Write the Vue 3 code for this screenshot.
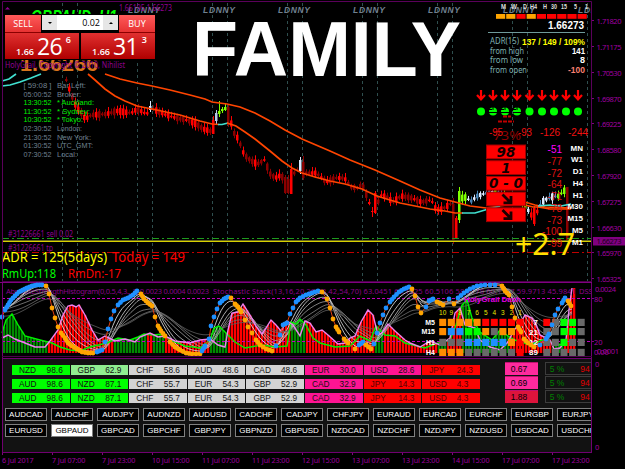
<template>
  <div class="terminal">
    <section class="price-pane">
      <svg width="592" height="282" viewBox="0 0 592 282">
        <line v-for="x in sessionLines" :key="'v' + x" :x1="x + 0.5" y1="3" :x2="x + 0.5" y2="281" class="session" />
        <text v-for="x in sessionTags" :key="'s' + x" :x="x" y="13" textLength="32" class="session-tag">LDNNY</text>

        <!-- velas -->
        <g v-for="c in candles" :key="'c' + c.x" :fill="c.color">
          <rect :x="c.x + 1" :y="c.high" width="1" :height="c.low - c.high" />
          <rect :x="c.x" :y="c.top" width="2.5" :height="c.bottom - c.top" />
        </g>

        <line x1="2" y1="238.5" x2="592" y2="238.5" class="order" />
        <line x1="2" y1="240.5" x2="592" y2="240.5" stroke="#66661a" />
        <line x1="2" y1="241.5" x2="592" y2="241.5" stroke="#d8d000" />
        <line x1="2" y1="252.5" x2="592" y2="252.5" class="order tp" />

        <polyline v-for="(m, i) in averages" :key="'m' + i" :points="m.points" :stroke="m.color" class="average" />

        <text
          v-for="(t, i) in priceTexts"
          :key="'t' + i"
          :x="t.x"
          :y="t.y"
          :font-size="t.size"
          :fill="t.color"
          :textLength="t.w"
          :class="t.kind"
          lengthAdjust="spacingAndGlyphs"
        >{{ t.text }}</text>

        <!-- painel de tendência -->
        <rect v-for="(c, i) in trendColors" :key="'q' + i" :x="496 + i * 10.2" y="14" width="9.2" height="4.8" :fill="c" />
        <line x1="488" y1="32.5" x2="585" y2="32.5" stroke="#6f9a9a" />
        <g v-for="(x, i) in signalX" :key="'a' + i">
          <path :transform="'translate(' + x + ' 90)'" d="M0 0V9M-4 5L0 9.3L4 5" class="arrow" />
          <circle :cx="x" cy="111.5" r="4" fill="#0f0" />
          <path v-if="i > 0 && i < 4" :transform="'translate(' + x + ' 111)'" d="M-4 -1.5H-1M-4 1.5H4M0 -4V-1" stroke="#000" />
        </g>
        <path d="M503 116.5h8M498 121.5h16" stroke="#c00000" stroke-width="2" stroke-dasharray="4 1" />
        <g v-for="(b, i) in boxes" :key="'b' + i">
          <rect x="486.5" :y="145 + i * 15.7" width="39" height="13.8" fill="#f00" stroke="#a00000" />
          <text v-if="b" x="506" :y="156.8 + i * 15.7" class="box-text" text-anchor="middle">{{ b }}</text>
          <path v-else :transform="'translate(507 ' + (151.8 + i * 15.7) + ')'" d="M-4.5 -4.5L3.5 3.5M4 -3V4H-3.5" stroke="#1a0000" stroke-width="2.8" fill="none" />
        </g>
        <g v-for="(r, i) in frames" :key="'f' + i">
          <text x="562" :y="153 + i * 11.75" class="strength" :fill="i ? '#e01010' : '#f0f'">{{ r[1] }}</text>
          <text x="583" :y="150.5 + i * 11.75" class="frame-name">{{ r[0] }}</text>
        </g>
        <text x="515" y="254.5" textLength="60" class="pips" lengthAdjust="spacingAndGlyphs">+2.7</text>
        <path d="M5 9.5l2.5 -2.5l2.5 2.5z" fill="#900090" />
        <path d="M2.5 281V1.5H591.5V281" fill="none" stroke="#5a005a" />
        <path d="M2 281.5H592" stroke="#4a004a" />
      </svg>

      <div class="trade">
        <div class="trade-top">
          <button class="side">SELL</button>
          <div class="lot">
            <span class="step"><i class="down"></i></span>
            <span class="amount">0.02</span>
            <span class="step"><i class="up"></i></span>
          </div>
          <button class="side">BUY</button>
        </div>
        <div class="trade-prices">
          <div class="quote" v-for="q in quotes" :key="q[1]">
            <span class="base">{{ q[0] }}</span>
            <span class="big">{{ q[1] }}</span>
            <span class="sup">{{ q[2] }}</span>
          </div>
        </div>
      </div>
    </section>

    <svg class="axis" width="33" height="282" viewBox="592 0 33 282">
      <g v-for="(p, i) in prices" :key="p">
        <line x1="592" :x2="594" :y1="priceY[i]" :y2="priceY[i]" stroke="#800080" />
        <text x="596.5" :y="priceY[i] + 3" textLength="25" class="axis-text">{{ p }}</text>
      </g>
      <rect x="593" y="237" width="32" height="8.5" fill="#800080" />
      <text x="596.5" y="244.3" textLength="25" class="axis-text tag">1.66273</text>
    </svg>

    <svg class="osc" width="592" height="76" viewBox="0 282 592 76">
      <rect x="0" y="282" width="592" height="1" fill="#800080" />
      <rect v-for="b in bars" :key="'h' + b.x" :x="b.x" :y="b.y" width="2.3" :height="353 - b.y" :fill="b.color" />
      <text x="6" y="293.5" textLength="203" class="osc-title">AbsoluteStrengthHistogram(0,0.5,4,3..,1) 0.0023 0.0004 0.0023</text>
      <text x="213" y="293.5" textLength="363" class="osc-title">Stochastic Stack(13,16,20,26,33,42,54,70) 63.0451 60.1225 60.5106 58.9178 60.1157 59.9713 45.9841</text>
      <text x="579" y="293.5" class="osc-title">DSS</text>
      <line x1="2" y1="298.5" x2="592" y2="298.5" class="level" />
      <line x1="2" y1="341.5" x2="592" y2="341.5" class="level" />
      <polyline v-for="(s, i) in stack" :key="'k' + i" :points="s" :stroke="stackColors[i]" class="stack" />
      <polyline :points="join(greenLine)" stroke="#00f000" class="strength-line" />
      <polyline :points="join(pinkLine)" stroke="#ee82ee" class="strength-line" />

      <g v-for="(row, r) in dashRows" :key="'r' + r">
        <template v-for="(c, i) in row" :key="i">
          <rect :x="439.2 + i * 8.6" :y="dashY[r] - 3.6" width="7" height="7.2" :fill="cellColor[c]" />
        </template>
        <template v-for="(c, i) in dashSide[r]" :key="'x' + i">
          <rect :x="543.3 + i * 8.6" :y="dashY[r] - 3.6" width="7" height="7.2" :fill="cellColor[c]" />
        </template>
        <text x="435" :y="dashY[r] + 2.5" class="dash-label">{{ ['M5', 'M15', 'H1', 'H4'][r] }}</text>
        <text x="538" :y="dashY[r] + 3" class="dash-label num">{{ ['7', '21', '12', '89'][r] }}</text>
      </g>
      <text v-for="n in 10" :key="'n' + n" :x="442.7 + (n - 1) * 8.6" y="315" class="dash-head">{{ 11 - n }}</text>

      <polyline :points="join(dots)" stroke="#e04010" fill="none" />
      <circle v-for="(d, i) in dots" :key="'d' + i" :cx="d[0]" :cy="d[1]" r="2.4" :fill="d[2] ? '#1e90ff' : '#ffa500'" />
      <text x="464" y="301.5" textLength="57" class="dash-title">HolyGrail Dash</text>
      <path d="M2.5 283V358M591.5 283V358" stroke="#700070" />
      <path d="M2 356.5H592" stroke="#4a004a" />
    </svg>

    <svg class="axis" width="33" height="76" viewBox="592 282 33 76">
      <path d="M592 298.5h2M592 341.5h2" stroke="#800080" />
      <text x="595" y="291.5" textLength="21" class="axis-text">0.0024</text>
      <text x="594" y="301.5" class="axis-text">80</text>
      <text x="594" y="344.5" class="axis-text">20</text>
      <text x="594" y="355" class="axis-text">0.00</text>
      <text x="597" y="354" textLength="22" class="axis-text">0.0001</text>
    </svg>

    <section class="board">
      <div class="strengths">
        <div class="currencies">
          <template v-for="(row, r) in currencies" :key="r">
            <div v-for="(c, i) in row" :key="i" class="currency" :class="c[2]">
              <span>{{ c[0] }}</span><span class="value">{{ c[1] }}</span>
            </div>
          </template>
        </div>
        <div class="ratios">
          <div class="ratio">0.67</div>
          <div class="ratio">0.69</div>
          <div class="ratio crimson">1.88</div>
        </div>
        <div class="percents">
          <div v-for="n in 3" :key="n" class="percent"><span>5 %</span><b>94</b></div>
        </div>
      </div>
      <div class="pairs">
        <button v-for="p in pairs" :key="p" :class="{ active: p === 'GBPAUD' }">{{ p }}</button>
      </div>
    </section>

    <div class="board-axis"><span>0</span><span>0</span></div>

    <footer class="times">
      <span v-for="t in times" :key="t">{{ t }}</span>
    </footer>
  </div>
</template>

<script setup>
const sessionLines = [62, 77, 137, 152, 212, 227, 287, 302, 362, 377, 437, 452, 512, 527, 587]
const sessionTags = [128, 203, 278, 353, 428, 503, 578]
const quotes = [['1.66', '26', '6'], ['1.66', '31', '3']]

const join = (pts) => pts.map((p) => p[0] + ',' + p[1]).join(' ')

// interpolação linear entre os nós
const at = (pts, x) => {
  if (x <= pts[0][0]) return pts[0][1]
  for (let i = 1; i < pts.length; i++) {
    if (x <= pts[i][0]) {
      const [x0, y0] = pts[i - 1]
      const [x1, y1] = pts[i]
      return y0 + ((y1 - y0) * (x - x0)) / (x1 - x0)
    }
  }
  return pts[pts.length - 1][1]
}

const toPairs = (s) => s.split(' ').map((p) => p.split(',').map(Number))

// --- Velas ---
const path = toPairs('65,80 70,95 75,107 80,113 84,119 90,115 105,114 116,111 130,113 136,109 145,114 152,109 158,112 165,115 175,118 185,120 195,124 202,129 209,131 228,115 232,132 237,139 243,155 250,161 256,164 263,160 269,174 274,178 280,175 286,188 292,174 298,168 305,173 315,173 325,182 335,178 343,178 350,187 356,188 361,184 367,200 371,212 375,208 379,195 386,197 391,202 400,196 410,198 420,202 430,200 435,210 441,209 449,204 463,197 470,201 476,196 482,194 490,192 520,200 530,215 534,217 538,206 543,200 550,197 557,196 565,189')
const special = {
  149: [101, 112, 106, 110, '#dce8ff'],
  212: [116, 134, 120, 134, '#f00'],
  215: [110, 124, 113, 121, '#b8c8e8'],
  218: [101, 117, 111, 114, '#7fff00'],
  221: [107, 113, 109, 111, '#7fff00'],
  224: [103, 111, 107, 110, '#7fff00'],
  227: [104, 127, 107, 125, '#8b0000'],
  284: [175, 194, 177, 193, '#8b0000'],
  287: [175, 194, 179, 193, '#8b0000'],
  290: [163, 194, 169, 194, '#f00'],
  299: [157, 174, 160, 171, '#dce8ff'],
  302: [156, 180, 162, 178, '#8b0000'],
  371: [207, 217, 211, 212, '#f00'],
  374: [191, 214, 193, 213, '#f00'],
  452: [198, 244, 204, 241, '#8b0000'],
  455: [216, 238, 218, 238, '#f00'],
  458: [187, 223, 191, 220, '#7fff00'],
  533: [206, 226, 208, 224, '#f00'],
  566: [187, 240, 187, 240, '#8b0000']
}
const candles = []
for (let x = 65; x <= 566; x += 3) {
  const s = special[x]
  if (s) {
    candles.push({ x, high: s[0], low: s[1], top: s[2], bottom: s[3], color: s[4] })
    continue
  }
  const y = at(path, x)
  const n = Math.abs(Math.sin(x * 12.9898) * 43758.5453) % 1
  const m = Math.abs(Math.sin(x * 4.1414) * 9301.17) % 1
  const body = 0.7 + n * 2.8
  let color = m > 0.55 ? '#f00' : '#8b0000'
  if (x > 458 && x < 528) color = n > 0.7 ? '#7fff00' : m > 0.5 ? '#4682b4' : '#dce8ff'
  if (x > 536) color = x > 556 ? '#7fff00' : m > 0.5 ? '#4682b4' : '#dce8ff'
  candles.push({ x, high: y - body - 1 - m * 3.5, low: y + body + 1 + n * 2.5, top: y - body, bottom: y + body, color })
}

const averages = [
  { color: '#40e0d0', points: '2,81 9,79 16,74' },
  { color: '#40e0d0', points: '2,86 10,85 20,82 31,78 41,74' },
  { color: '#ff4500', points: '105,74 120,79 137,83 152,86 170,90 190,95 205,99 212,102 227,104 240,107 255,113 270,121 285,130 302,139 330,151 350,160 375,170 400,181 420,190 440,198 455,202 470,206 486,208 525,202 535,205 545,207 571,208' },
  { color: '#ff4500', points: '88,74 95,80 105,89 115,96 125,101 137,106 152,109 180,115 200,121 212,124 219,124.5' },
  { color: '#40e0d0', points: '218,124.5 222,124.5 228,123' },
  { color: '#ff4500', points: '227,123 236,126 245,132 255,139 270,151 282,161 292,168 302,173 315,177 330,181 345,184 362,189 377,196 390,200 400,203 415,206 430,209 445,211 455,213 463,213' },
  { color: '#40e0d0', points: '462,213 475,213 485,210 500,206' },
  { color: '#ff4500', points: '525,205 533,207 538,207 550,209 571,209' },
  { color: '#40e0d0', points: '538,206 550,205 561,206 571,204' }
]

// --- Textos do gráfico ---
const priceTexts = [
  { x: 31, y: 23, size: 19, w: 86, color: '#0f0', kind: 'bold slant', text: 'GBPAUD, H1' },
  { x: 119, y: 11, size: 8, w: 53, color: '#900090', kind: 'narrow', text: '1.66195 1.66273' },
  { x: 20, y: 71, size: 20, w: 78, color: '#d8731c', kind: 'bold', text: '1.66266' },
  { x: 5, y: 68, size: 8, w: 120, color: '#900090', kind: 'narrow', text: 'HolyGrail, Copyright © 2010, Nihilist' },
  { x: 192, y: 76, size: 77, w: 269, color: '#fff', kind: 'bold', text: 'FAMILY' },
  { x: 548, y: 29, size: 10, w: 36, color: '#fff', kind: 'bold cond', text: '1.66273' },
  { x: 490, y: 44, size: 8.5, w: 29, color: '#7fb0b0', kind: 'narrow', text: 'ADR(15)' },
  { x: 522, y: 44.5, size: 8.5, w: 63, color: '#ff0', kind: 'bold cond', text: '137 / 149 / 109%' },
  { x: 490, y: 53.5, size: 8.5, w: 34, color: '#7fb0b0', kind: 'narrow', text: 'from high' },
  { x: 490, y: 63, size: 8.5, w: 33, color: '#7fb0b0', kind: 'narrow', text: 'from low' },
  { x: 490, y: 72.5, size: 8.5, w: 37, color: '#7fb0b0', kind: 'narrow', text: 'from open' },
  { x: 572, y: 54, size: 8.5, w: 13, color: '#fff', kind: 'bold cond', text: '141' },
  { x: 580, y: 63.3, size: 8.5, w: 5, color: '#fff', kind: 'bold cond', text: '8' },
  { x: 568, y: 72.7, size: 8.5, w: 17, color: '#fa8072', kind: 'bold cond', text: '-100' },
  { x: 501, y: 9, size: 6.5, w: 5, color: '#ddd', kind: 'bold', text: 'M' },
  { x: 511, y: 9, size: 6.5, w: 6, color: '#ddd', kind: 'bold', text: 'W' },
  { x: 523, y: 9, size: 6.5, w: 4, color: '#ddd', kind: 'bold', text: 'D' },
  { x: 530, y: 9, size: 6.5, w: 7, color: '#ddd', kind: 'bold', text: 'H4' },
  { x: 543, y: 9, size: 6.5, w: 4, color: '#ddd', kind: 'bold', text: 'H' },
  { x: 551, y: 9, size: 6.5, w: 6, color: '#ddd', kind: 'bold', text: '30' },
  { x: 561, y: 9, size: 6.5, w: 6, color: '#ddd', kind: 'bold', text: '15' },
  { x: 574, y: 9, size: 6.5, w: 3, color: '#ddd', kind: 'bold', text: '5' },
  { x: 585, y: 9, size: 6.5, w: 3, color: '#ddd', kind: 'bold', text: '1' },
  { x: 493, y: 140, size: 13, w: 28, color: '#8b0000', kind: 'narrow', text: '73%' },
  { x: 489, y: 136, size: 10, w: 14, color: '#f01010', kind: 'cond', text: '-95' },
  { x: 518, y: 136, size: 10, w: 14, color: '#f01010', kind: 'cond', text: '-93' },
  { x: 540, y: 136, size: 10, w: 20, color: '#f01010', kind: 'cond', text: '-126' },
  { x: 568, y: 136, size: 10, w: 20, color: '#f01010', kind: 'cond', text: '-244' },
  { x: 8, y: 237, size: 8, w: 65, color: '#900090', kind: 'narrow', text: '#31226661 sell 0.02' },
  { x: 8, y: 251, size: 8, w: 45, color: '#900090', kind: 'narrow', text: '#31226661 tp' },
  { x: 2, y: 262, size: 14, w: 105, color: '#ff0', kind: 'narrow', text: 'ADR = 125(5days)' },
  { x: 112, y: 262, size: 14, w: 73, color: '#f00', kind: 'narrow', text: 'Today = 149' },
  { x: 2, y: 277.5, size: 12.5, w: 54, color: '#0f0', kind: 'narrow', text: 'RmUp:118' },
  { x: 68, y: 277.5, size: 12.5, w: 53, color: '#f00', kind: 'narrow', text: 'RmDn:-17' }
]
const clocks = [
  ['[ 59:08 ]', 'Bar Left:', 29],
  ['05:00:52', 'Broker:', 24],
  ['13:30:52', '* Auckland:', 37, true],
  ['11:30:52', '* Sydney:', 33, true],
  ['10:30:52', '* Tokyo:', 26, true],
  ['02:30:52', 'London:', 25],
  ['21:30:52', 'New York:', 34],
  ['01:30:52', 'UTC_GMT:', 36],
  ['07:30:52', 'Local:', 20]
]
clocks.forEach((c, i) => {
  const color = c[3] ? '#00f000' : '#708090'
  const y = 88 + i * 8.6
  priceTexts.push({ x: 23.5, y, size: 8, w: 28, color, kind: 'cond', text: c[0] })
  priceTexts.push({ x: 57, y, size: 8, w: c[2], color, kind: 'cond', text: c[1] })
})

const trendColors = ['#ffa500', '#ffa500', '#f00', '#ffa500', '#f00', '#f00', '#f00', '#f00', '#f00']
const signalX = [481, 493, 505, 517, 529.5, 542, 554, 566, 578]
const boxes = ['98', '1', '0 - 0', '', '']
const frames = [['MN', '-51'], ['W1', '-77'], ['D1', '-72'], ['H4', '-64'], ['H1', '-71'], ['M30', '-78'], ['M15', '-73'], ['M5', '-100'], ['M1', '-99']]

const prices = ['1.71820', '1.71175', '1.70530', '1.69870', '1.69225', '1.68580', '1.67920', '1.67275', '1.66630', '1.65970', '1.65325']
const priceY = [20.5, 46.5, 72.5, 98.5, 123.5, 149.5, 175.5, 201.5, 227.5, 252.5, 278.5]

// --- Osciladores ---
const pinkLine = toPairs('2,338 8,335 15,339 25,343 35,347 45,347 50,341 58,330 63,315 68,306 72,305 76,307 79,305 85,315 92,330 98,340 105,336 115,341 125,339 135,342 140,337 150,333 158,337 165,336 175,341 190,343 200,340 210,339 218,345 225,347 228,330 232,313 238,312 243,304 250,315 256,326 262,334 266,328 271,320 276,325 281,331 287,321 293,325 300,336 305,321 310,323 316,332 322,330 328,335 338,344 345,343 350,338 355,336 361,322 368,310 373,315 378,335 382,333 388,324 395,331 405,340 410,343 420,347 430,341 440,345 450,338 455,313 460,308 465,325 475,328 480,340 490,347 500,350 508,342 514,330 520,324 525,315 532,318 536,324 540,335 550,340 554,349 560,348 566,340 569,310 572,288')
const greenLine = toPairs('2,333 6,320 12,314 18,325 25,336 40,340 52,343 60,347 70,350 80,351 90,347 107,343 118,338 130,340 138,337 144,334 153,335 162,334 170,340 185,346 200,348 210,340 214,328 219,326 226,333 235,342 245,348 262,345 275,347 287,346 291,322 296,324 300,319 306,325 313,338 320,343 335,347 350,346 360,336 370,341 376,326 385,335 395,336 405,343 425,348 435,344 450,340 456,325 462,305 467,300 472,318 480,332 492,340 500,330 508,336 515,340 530,345 545,339 555,344 566,345')
const bars = []
for (let x = 3; x < 574; x += 3) {
  const p = at(pinkLine, x + 1)
  const g = x > 568 ? 350 : at(greenLine, x + 1)
  bars.push({ x, y: Math.min(p, g), color: p < g ? '#f00' : '#008a00' })
}

const waves = [
  [1, '2,317 5,310 8,305 11,300 15,296 19,292 23,290 27,288 32,286 37,285 42,285'],
  [0, '46,286 49,294 52,308 55,318 58,327 61,333 65,338 68,343 72,346 77,349 82,352 88,353 93,353'],
  [1, '97,352 102,350 105,342 108,329 111,319 114,311 118,305 123,300 128,298 133,295 137,291'],
  [0, '141,294 144,299 148,303 152,306 155,317 158,326 161,331 165,336 170,342 175,347 180,350 186,353 192,354 200,354'],
  [1, '202,351 205,346 209,339 211,326 214,317 217,309 220,303 224,299 228,297'],
  [0, '231,298 235,304 238,307 241,312 245,320 248,327 252,333 256,340 260,345 266,349 272,351'],
  [1, '276,346 280,335 283,325 287,323 290,314 293,308 296,302 300,298 306,295 312,293 318,291'],
  [0, '322,292 327,299 330,308 333,319 336,327 339,332 344,339 348,343 355,349'],
  [1, '359,345 363,342'],
  [0, '366,345 371,349'],
  [1, '374,344 377,333 380,323 383,315 386,308 390,302 394,297 399,292 404,289 409,287'],
  [0, '412,289 415,296 418,307 421,313'],
  [1, '426,307 429,301 433,299'],
  [0, '437,302 443,305'],
  [1, '449,299'],
  [0, '454,304'],
  [1, '458,298 464,293 470,289 477,286 485,285 495,285'],
  [0, '502,286 505,291 509,295 512,307 515,318 518,327 521,332 524,339 528,343 534,347'],
  [1, '540,345 546,339 549,334 552,325 555,315 558,309 562,303 565,298'],
  [0, '568,301 571,306']
]
const dots = []
waves.forEach(([up, s]) => {
  toPairs(s).forEach((p, i, all) => {
    const prev = all[i - 1]
    // preenche os trechos mais planos
    if (prev && Math.abs(p[1] - prev[1]) < 6) {
      dots.push([(p[0] + prev[0]) / 2, (p[1] + prev[1]) / 2, up])
    }
    dots.push([p[0], p[1], up])
  })
})

// linhas do estocástico: médias cada vez mais lentas
const stackColors = ['#f0f0f0', '#d8d8d8', '#c0c0c0', '#a0a0a0', '#888', '#707070', '#606060']
const stack = [0.42, 0.28, 0.2, 0.15, 0.11, 0.08, 0.06].map((a, k) => {
  let v = 298 + k * 3
  const pts = []
  for (let x = 2; x <= 572; x += 3) {
    v += a * (at(dots, x) - v)
    const y = v + Math.sin(x / 9 + k) * 1.5
    pts.push(x + ',' + Math.min(353, y).toFixed(1))
  }
  return pts.join(' ')
})

const cellColor = { O: '#ff8c00', R: '#f00', B: '#1e90ff', G: '#0f0', D: '#696969' }
const dashY = [322.4, 331.6, 342.4, 352.4]
const dashRows = ['OOOOORRRRR', 'OBBGGODOOR', 'DDDBBBBBOR', 'OOODDDDDDR']
const dashSide = ['RDGGD', 'DDGGD', 'DDGDD', 'DDDDD']

// --- Força das moedas ---
const currencies = [
  [['NZD', '98.6', 'lime'], ['GBP', '62.9', 'soft'], ['CHF', '58.6', 'gray'], ['AUD', '48.6', 'gray'], ['CAD', '48.6', 'gray'], ['EUR', '30.0', 'pink'], ['USD', '28.6', 'pink'], ['JPY', '24.3', 'red']],
  [['AUD', '98.6', 'lime'], ['NZD', '87.1', 'lime'], ['CHF', '55.7', 'gray'], ['EUR', '54.3', 'gray'], ['GBP', '52.9', 'gray'], ['CAD', '32.9', 'pink'], ['JPY', '14.3', 'red'], ['USD', '4.3', 'red']],
  [['AUD', '98.6', 'lime'], ['NZD', '87.1', 'lime'], ['CHF', '55.7', 'gray'], ['EUR', '54.3', 'gray'], ['GBP', '52.9', 'gray'], ['CAD', '32.9', 'pink'], ['JPY', '14.3', 'red'], ['USD', '4.3', 'red']]
]
const pairs = [
  'AUDCAD', 'AUDCHF', 'AUDJPY', 'AUDNZD', 'AUDUSD', 'CADCHF', 'CADJPY', 'CHFJPY', 'EURAUD', 'EURCAD', 'EURCHF', 'EURGBP', 'EURJPY',
  'EURUSD', 'GBPAUD', 'GBPCAD', 'GBPCHF', 'GBPJPY', 'GBPNZD', 'GBPUSD', 'NZDCAD', 'NZDCHF', 'NZDJPY', 'NZDUSD', 'USDCAD', 'USDCHF'
]
const times = ['6 Jul 2017', '7 Jul 07:00', '7 Jul 23:00', '10 Jul 15:00', '11 Jul 07:00', '11 Jul 23:00', '12 Jul 15:00', '13 Jul 07:00', '13 Jul 23:00', '14 Jul 15:00', '17 Jul 07:00', '17 Jul 23:00']
</script>

<style>
body {
  background: #000;
  overflow: hidden;
}
</style>

<style scoped>
.terminal {
  display: grid;
  grid-template-columns: 592px 33px;
  grid-template-rows: 282px 76px 95px 16px;
  width: 625px;
  height: 469px;
  overflow: hidden;
  background: #000;
  font-family: "Liberation Sans", Arial, sans-serif;
}

svg {
  display: block;
}

.price-pane {
  position: relative;
}

.session {
  stroke: #2f4f4f;
  stroke-dasharray: 3 3;
}

.session-tag {
  font-size: 8.5px;
  font-weight: bold;
  font-style: italic;
  fill: #708090;
}

.order {
  stroke: #1e9a1e;
  stroke-dasharray: 7 3 2 3;
}

.order.tp {
  stroke: #c00000;
}

.average {
  fill: none;
  stroke-width: 1.7;
}

.bold {
  font-weight: bold;
}

.slant {
  font-style: italic;
}

.narrow {
  font-family: "Noto Sans", sans-serif;
}

.arrow {
  fill: none;
  stroke: #f00;
  stroke-width: 2.2;
}

.box-text {
  font: italic bold 13.5px "DejaVu Sans", sans-serif;
  fill: #100000;
}

.strength {
  font-size: 10px;
  text-anchor: end;
}

.frame-name {
  font-size: 8px;
  font-weight: bold;
  fill: #fff;
  text-anchor: end;
}

.pips {
  font: 31px "Noto Sans", sans-serif;
  fill: #ffe000;
}

/* painel de negociação */
.trade {
  position: absolute;
  left: 4px;
  top: 14px;
  width: 152px;
  height: 46px;
  box-sizing: border-box;
  padding: 1px;
  background: #000;
}

.trade-top {
  display: flex;
  height: 18px;
  justify-content: space-between;
}

.side {
  width: 36px;
  padding: 0;
  border: none;
  background: linear-gradient(#ff5a5a, #e63232);
  border-bottom: 1px solid #8a0000;
  color: #fff;
  font: 9px "Open Sans", sans-serif;
}

.lot {
  display: flex;
  width: 76px;
  height: 15px;
  background: #fff;
}

.step {
  display: flex;
  align-items: center;
  justify-content: center;
  width: 15px;
  background: #e6e6e6;
}

.step i {
  border: 2.5px solid transparent;
}

.down {
  border-top-color: #000 !important;
  margin-top: 2px;
}

.up {
  border-bottom-color: #000 !important;
  margin-bottom: 2px;
}

.amount {
  flex: 1;
  padding-right: 3px;
  text-align: right;
  font: 9px/15px "Open Sans", sans-serif;
}

.trade-prices {
  display: flex;
  gap: 2px;
  height: 26px;
}

.quote {
  display: flex;
  flex: 1;
  align-items: flex-end;
  justify-content: flex-end;
  padding-right: 8px;
  background: linear-gradient(#e03030, #b00000);
  color: #fff;
  font-family: "Open Sans", sans-serif;
}

.base {
  font-size: 9px;
  font-weight: 600;
  line-height: 15px;
  margin-right: 3px;
}

.big {
  font-size: 23px;
  line-height: 26px;
  letter-spacing: -0.7px;
}

.sup {
  align-self: flex-start;
  margin: 1px 0 0 4px;
  font-size: 9px;
  font-weight: 600;
  line-height: 12px;
}

/* eixos */
.axis-text {
  font: 7.5px "Noto Sans", sans-serif;
  fill: #a000a0;
}

.axis-text.tag {
  fill: #1a001a;
}

.osc-title {
  font: 7.5px "Noto Sans", sans-serif;
  fill: #8c008c;
}

.level {
  stroke: #c000c0;
  stroke-dasharray: 3 2;
}

.stack {
  fill: none;
  stroke-width: 0.8;
}

.strength-line {
  fill: none;
  stroke-width: 1.4;
}

.dash-label {
  font-size: 7px;
  font-weight: bold;
  fill: #fff;
  text-anchor: end;
}

.dash-label.num {
  font-size: 8px;
}

.dash-head {
  font-size: 6.5px;
  fill: #e8e800;
  text-anchor: middle;
}

.dash-title {
  font-size: 8px;
  font-weight: bold;
  fill: #e000e0;
}

/* quadro inferior */
.board {
  box-sizing: border-box;
  margin-left: 2px;
  padding-top: 3px;
  overflow: hidden;
  background: #121212;
  border: 1px solid #700070;
}

.strengths {
  display: flex;
  height: 41px;
}

.currencies {
  display: grid;
  grid-template-columns: repeat(8, 57.6px);
  grid-auto-rows: 10px;
  gap: 4px 1px;
  margin: 3px 0 0 9px;
}

.currency {
  display: flex;
  justify-content: space-between;
  padding: 0 6px 0 7px;
  font-size: 8.3px;
  line-height: 10.5px;
  color: #111;
}

.value {
  width: 17px;
}

.lime { background: #0f0; }
.soft { background: #90ee90; }
.gray { background: #d3d3d3; }
.pink { background: #ff1493; }
.red { background: #f00; color: #500000; }

.ratios {
  display: flex;
  flex-direction: column;
  gap: 1px;
  margin-left: 25px;
}

.ratio {
  width: 33px;
  height: 13px;
  box-sizing: border-box;
  padding-left: 6px;
  background: #ff2a9d;
  border-top: 1px solid #c01070;
  font-size: 8.5px;
  line-height: 12px;
}

.ratio.crimson {
  background: #dc143c;
}

.percents {
  display: flex;
  flex-direction: column;
  gap: 1px;
  margin-left: 7px;
}

.percent {
  display: flex;
  justify-content: space-between;
  width: 50px;
  height: 13px;
  box-sizing: border-box;
  padding: 0 4px;
  border: 1px solid #3c3c3c;
  color: #008000;
  font-size: 8.5px;
  line-height: 12px;
}

.percent b {
  color: #e00000;
  font-weight: normal;
}

.pairs {
  display: grid;
  grid-template-columns: repeat(13, 42px);
  grid-auto-rows: 13px;
  gap: 2.5px 4px;
  margin: 5px 0 0 2px;
}

.pairs button {
  padding: 0;
  border: 1px solid #808080;
  background: #000;
  color: #fff;
  font: 8px/11px "Liberation Sans", sans-serif;
}

.pairs button.active {
  background: #fff;
  color: #000;
}

.board-axis {
  display: flex;
  flex-direction: column;
  justify-content: space-between;
  padding: 0 0 0 3px;
  color: #a000a0;
  font: 7.5px/12px "Noto Sans", sans-serif;
}

.times {
  display: flex;
  grid-column: 1 / 3;
  padding-left: 2px;
  color: #a000a0;
  font: 7.2px/14px "Noto Sans", sans-serif;
}

.times span {
  width: 50px;
  flex: none;
  box-sizing: border-box;
  white-space: nowrap;
  letter-spacing: -0.1px;
}

.times span::before {
  content: "";
  display: block;
  width: 1px;
  height: 2px;
  margin-bottom: -2px;
  background: #800080;
}
</style>
